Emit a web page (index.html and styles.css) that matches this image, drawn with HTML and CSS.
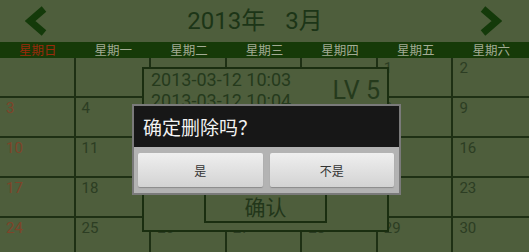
FILE: index.html
```html
<!DOCTYPE html>
<html>
<head>
<meta charset="utf-8">
<link rel="stylesheet" href="styles.css">
</head>
<body>
<div class="header">
  <svg class="chev" width="24" height="42" viewBox="0 0 24 42"><path d="M19 9 L5 21 L19 33" fill="none" stroke="#143a0a" stroke-width="7"/></svg>
  <div class="title"><span>2013年</span><span class="month">3月</span></div>
  <svg class="chev" width="24" height="42" viewBox="0 0 24 42"><path d="M5 9 L19 21 L5 33" fill="none" stroke="#143a0a" stroke-width="7"/></svg>
</div>
<div class="weekbar">
  <div class="wsun">星期日</div><div>星期一</div><div>星期二</div><div>星期三</div><div>星期四</div><div>星期五</div><div>星期六</div>
</div>
<div class="grid">
  <div class="cell"></div><div class="cell"></div><div class="cell"></div><div class="cell"></div><div class="cell"></div><div class="cell">1</div><div class="cell">2</div>
  <div class="cell sun">3</div><div class="cell">4</div><div class="cell">5</div><div class="cell">6</div><div class="cell">7</div><div class="cell">8</div><div class="cell">9</div>
  <div class="cell sun">10</div><div class="cell">11</div><div class="cell">12</div><div class="cell">13</div><div class="cell">14</div><div class="cell">15</div><div class="cell">16</div>
  <div class="cell sun">17</div><div class="cell">18</div><div class="cell">19</div><div class="cell">20</div><div class="cell">21</div><div class="cell">22</div><div class="cell">23</div>
  <div class="cell sun">24</div><div class="cell">25</div><div class="cell">26</div><div class="cell">27</div><div class="cell">28</div><div class="cell">29</div><div class="cell">30</div>
</div>

<div class="listbox">
  <div class="item">
    <div class="dates"><div>2013-03-12 10:03</div><div>2013-03-12 10:04</div></div>
    <div class="lv">LV 5</div>
  </div>
  <div class="item">
    <div class="dates"><div>2013-03-12 10:05</div><div>2013-03-12 10:06</div></div>
    <div class="lv">LV 5</div>
  </div>
  <div class="confirm">确认</div>
</div>

<div class="dialog">
  <div class="dtitle">确定删除吗？</div>
  <div class="dbtns">
    <div class="btn">是</div>
    <div class="btn">不是</div>
  </div>
</div>
</body>
</html>
```
FILE: styles.css
```css
html, body {
  margin: 0;
  padding: 0;
}
body {
  width: 529px;
  height: 252px;
  overflow: hidden;
  position: relative;
  background: #4e5e3c;
  font-family: Roboto, "Noto Sans CJK SC", sans-serif;
}
.header {
  height: 42px;
  display: flex;
  align-items: center;
  padding: 0 27px 0 25px;
}
.chev {
  display: block;
  flex: none;
}
.title {
  flex: 1;
  text-align: center;
  padding-right: 17px;
  font-size: 24px;
  line-height: 42px;
  color: #1c3517;
}
.month {
  margin-left: 20px;
}
.weekbar {
  height: 16px;
  background: #163a08;
  display: grid;
  grid-template-columns: repeat(7, 1fr);
  font-family: "Noto Sans CJK SC", sans-serif;
  font-size: 12.5px;
  line-height: 16px;
  color: #a3ab94;
  text-align: center;
}
.wsun {
  color: #9a2a0c;
}
.grid {
  display: grid;
  grid-template-columns: repeat(7, 1fr);
  grid-auto-rows: 40px;
}
.cell {
  border-right: 2px solid #1e3014;
  border-bottom: 2px solid #1e3014;
  padding: 1px 0 0 6px;
  font-size: 15px;
  line-height: 18px;
  color: #2c3d23;
}
.cell:nth-child(7n) {
  border-right: none;
}
.sun {
  color: #7e4429;
}
.listbox {
  position: absolute;
  left: 142px;
  top: 67px;
  width: 247px;
  height: 165px;
  box-sizing: border-box;
  border: 2px solid #1a2e10;
  background: #4e5e3c;
  display: flex;
  flex-direction: column;
}
.item {
  height: 42px;
  flex: none;
  display: flex;
  align-items: center;
  justify-content: space-between;
  padding: 0 7px 0 7px;
}
.dates {
  font-size: 18px;
  line-height: 21px;
  color: #253a1c;
}
.lv {
  font-size: 25px;
  color: #253a1c;
}
.confirm {
  margin: auto auto 7px;
  width: 123px;
  height: 34px;
  box-sizing: border-box;
  border: 2px solid #1a2e10;
  display: flex;
  align-items: center;
  justify-content: center;
  font-family: "Noto Sans CJK SC", sans-serif;
  font-size: 21px;
  color: #22361a;
}
.dialog {
  position: absolute;
  left: 132px;
  top: 104px;
  width: 269px;
  box-sizing: border-box;
  border: 2px solid #7a7a7a;
  background: #b3b3b3;
}
.dtitle {
  height: 41px;
  line-height: 41px;
  background: rgba(6, 6, 6, 0.9);
  color: #f2f2f2;
  font-family: "Noto Sans CJK SC", sans-serif;
  font-size: 19px;
  padding-left: 9px;
}
.dbtns {
  display: flex;
  gap: 7px;
  padding: 6px 5px 6px 4px;
}
.btn {
  flex: 1;
  height: 34px;
  background: linear-gradient(#efefef, #d3d3d3);
  border-radius: 2px;
  box-shadow: 0 1px 1px #8a8a8a;
  display: flex;
  align-items: center;
  justify-content: center;
  font-family: "Noto Sans CJK SC", sans-serif;
  font-size: 12px;
  color: #333;
}
```
